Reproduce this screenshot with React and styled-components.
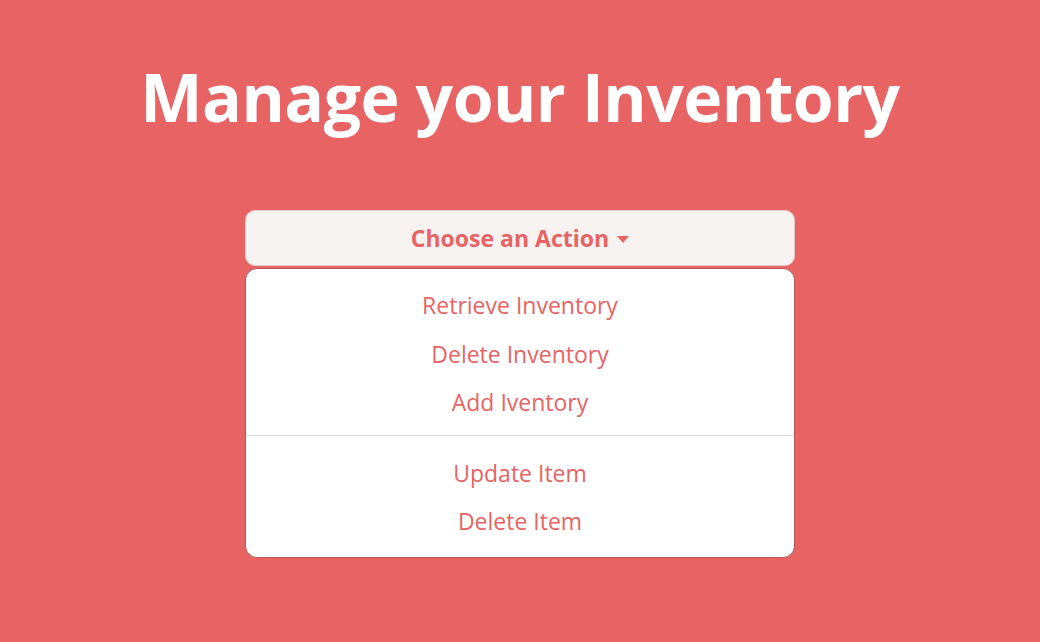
import React from 'react';
import styled, { createGlobalStyle } from 'styled-components';

const GlobalStyle = createGlobalStyle`
  html, body {
    margin: 0;
    padding: 0;
    background: #e86363;
    font-family: "Open Sans", "Noto Sans", sans-serif;
  }
`;

const Page = styled.div`
  width: 1040px;
  height: 642px;
  background: #e86363;
  display: flex;
  flex-direction: column;
  align-items: center;
  padding-top: 53px;
  box-sizing: border-box;
`;

const Title = styled.h1`
  margin: 0;
  color: #ffffff;
  font-size: 66px;
  font-weight: 700;
  line-height: 86px;
  letter-spacing: -0.5px;
`;

const Dropdown = styled.div`
  margin-top: 71px;
  width: 550px;
  display: flex;
  flex-direction: column;
  gap: 2px;
`;

const Toggle = styled.button`
  height: 56px;
  width: 100%;
  background: #f7f2f2;
  border: 1px solid #e3c9c9;
  border-radius: 10px;
  color: #e86363;
  font-family: inherit;
  font-size: 23px;
  font-weight: 700;
  display: flex;
  align-items: center;
  justify-content: center;
  gap: 8px;
  cursor: pointer;
`;

const Caret = styled.span`
  width: 0;
  height: 0;
  border-left: 6px solid transparent;
  border-right: 6px solid transparent;
  border-top: 7px solid #e86363;
  margin-top: 2px;
`;

const Menu = styled.div`
  background: #ffffff;
  border: 1px solid #b85656;
  border-radius: 12px;
  padding: 12px 0 11px;
  display: flex;
  flex-direction: column;
`;

const Item = styled.a`
  display: block;
  text-align: center;
  color: #e86363;
  font-size: 23px;
  line-height: 48.5px;
  height: 48.5px;
  text-decoration: none;
  cursor: pointer;
`;

const Divider = styled.hr`
  border: 0;
  border-top: 1px solid #d9d9d9;
  margin: 8px 0 13px;
`;

export default function App() {
  return (
    <>
      <GlobalStyle />
      <Page>
        <Title>Manage your Inventory</Title>
        <Dropdown>
          <Toggle>
            Choose an Action <Caret />
          </Toggle>
          <Menu>
            <Item>Retrieve Inventory</Item>
            <Item>Delete Inventory</Item>
            <Item>Add Iventory</Item>
            <Divider />
            <Item>Update Item</Item>
            <Item>Delete Item</Item>
          </Menu>
        </Dropdown>
      </Page>
    </>
  );
}
